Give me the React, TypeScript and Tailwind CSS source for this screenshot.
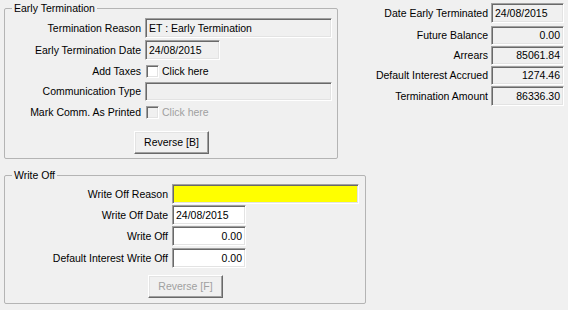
import React from 'react'

// classic win32 sunken edge used by text boxes and check boxes
const sunken =
  'border border-t-[#a0a0a0] border-l-[#a0a0a0] border-r-white border-b-white shadow-[inset_1px_1px_0_#696969,inset_-1px_-1px_0_#e3e3e3]'

const raised =
  'border border-t-white border-l-white border-r-[#696969] border-b-[#696969] shadow-[inset_-1px_-1px_0_#a0a0a0,inset_1px_1px_0_#e3e3e3]'

function Box({ className = '', right = false, children }: { className?: string; right?: boolean; children?: React.ReactNode }) {
  return (
    <div className={`${sunken} flex items-center px-[3px] whitespace-nowrap ${right ? 'justify-end' : ''} ${className}`}>
      {children}
    </div>
  )
}

function Check({ disabled = false }: { disabled?: boolean }) {
  return <div className={`${sunken} w-[13px] h-[13px] ${disabled ? 'bg-[#f0f0f0]' : 'bg-white'}`} />
}

function Button({ label, disabled = false, className = '' }: { label: string; disabled?: boolean; className?: string }) {
  return (
    <div
      className={`${raised} w-[75px] h-[23px] flex items-center justify-center bg-[#f0f0f0] ${disabled ? 'text-[#a0a0a0]' : 'text-black'} ${className}`}
    >
      {label}
    </div>
  )
}

function GroupBox({ title, className = '', children }: { title: string; className?: string; children: React.ReactNode }) {
  return (
    <div className={`relative border border-[#b4b4b4] rounded-[2px] ${className}`}>
      {/* legend sits on top of the frame line */}
      <span className="absolute left-[7px] -top-[7px] px-[2px] bg-[#f0f0f0] leading-[13px]">{title}</span>
      {children}
    </div>
  )
}

export default function App() {
  return (
    <div className="w-[568px] h-[310px] bg-[#f0f0f0] text-black text-[10.5px] leading-[13px] font-['Liberation_Sans',Arial,sans-serif] overflow-hidden">
      <div className="flex">
        {/* Early Termination */}
        <GroupBox title="Early Termination" className="mt-[8px] ml-[4px] w-[334px] h-[151px] pt-[9px]">
          <div className="flex items-center h-[20px]">
            <span className="w-[136px] text-right">Termination Reason</span>
            <Box className="ml-[4px] w-[187px] h-[20px] bg-[#f0f0f0]">ET : Early Termination</Box>
          </div>
          <div className="flex items-center h-[20px] mt-[2px]">
            <span className="w-[136px] text-right">Early Termination Date</span>
            <Box className="ml-[4px] w-[75px] h-[20px] bg-[#f0f0f0]">24/08/2015</Box>
          </div>
          <div className="flex items-center h-[22px]">
            <span className="w-[136px] text-right">Add Taxes</span>
            <div className="ml-[5px]">
              <Check />
            </div>
            <span className="ml-[3px]">Click here</span>
          </div>
          <div className="flex items-center h-[19px]">
            <span className="w-[136px] text-right">Communication Type</span>
            <Box className="ml-[4px] w-[187px] h-[19px] bg-[#f0f0f0]" />
          </div>
          <div className="flex items-center h-[22px]">
            <span className="w-[136px] text-right">Mark Comm. As Printed</span>
            <div className="ml-[5px]">
              <Check disabled />
            </div>
            <span className="ml-[3px] text-[#a0a0a0]">Click here</span>
          </div>
          <Button label="Reverse [B]" className="mt-[8px] ml-[129px]" />
        </GroupBox>

        {/* Totals */}
        <div className="flex-1 flex flex-col items-end pr-[4px] pt-[3px]">
          <div className="flex items-center h-[20px]">
            <span className="text-right">Date Early Terminated</span>
            <Box className="ml-[3px] w-[73px] h-[20px] bg-[#f0f0f0]">24/08/2015</Box>
          </div>
          <div className="flex items-center h-[19px] mt-[3px]">
            <span className="text-right">Future Balance</span>
            <Box right className="ml-[3px] w-[73px] h-[19px] bg-[#f0f0f0]">0.00</Box>
          </div>
          <div className="flex items-center h-[19px] mt-[1px]">
            <span className="text-right">Arrears</span>
            <Box right className="ml-[3px] w-[73px] h-[19px] bg-[#f0f0f0]">85061.84</Box>
          </div>
          <div className="flex items-center h-[19px] mt-[1px]">
            <span className="text-right">Default Interest Accrued</span>
            <Box right className="ml-[3px] w-[73px] h-[19px] bg-[#f0f0f0]">1274.46</Box>
          </div>
          <div className="flex items-center h-[20px] mt-[1px]">
            <span className="text-right">Termination Amount</span>
            <Box right className="ml-[3px] w-[73px] h-[20px] bg-[#f0f0f0]">86336.30</Box>
          </div>
        </div>
      </div>

      {/* Write Off */}
      <GroupBox title="Write Off" className="mt-[16px] ml-[4px] w-[362px] h-[129px] pt-[8px]">
        <div className="flex items-center h-[20px]">
          <span className="w-[163px] text-right">Write Off Reason</span>
          <Box className="ml-[4px] w-[187px] h-[20px] bg-[#ffff00]" />
        </div>
        <div className="flex items-center h-[20px] mt-[1px]">
          <span className="w-[163px] text-right">Write Off Date</span>
          <Box className="ml-[4px] w-[74px] h-[20px] bg-white">24/08/2015</Box>
        </div>
        <div className="flex items-center h-[20px] mt-[1px]">
          <span className="w-[163px] text-right">Write Off</span>
          <Box right className="ml-[4px] w-[74px] h-[20px] bg-white">0.00</Box>
        </div>
        <div className="flex items-center h-[20px] mt-[2px]">
          <span className="w-[163px] text-right">Default Interest Write Off</span>
          <Box right className="ml-[4px] w-[74px] h-[20px] bg-white">0.00</Box>
        </div>
        <Button label="Reverse [F]" disabled className="mt-[7px] ml-[143px]" />
      </GroupBox>
    </div>
  )
}
